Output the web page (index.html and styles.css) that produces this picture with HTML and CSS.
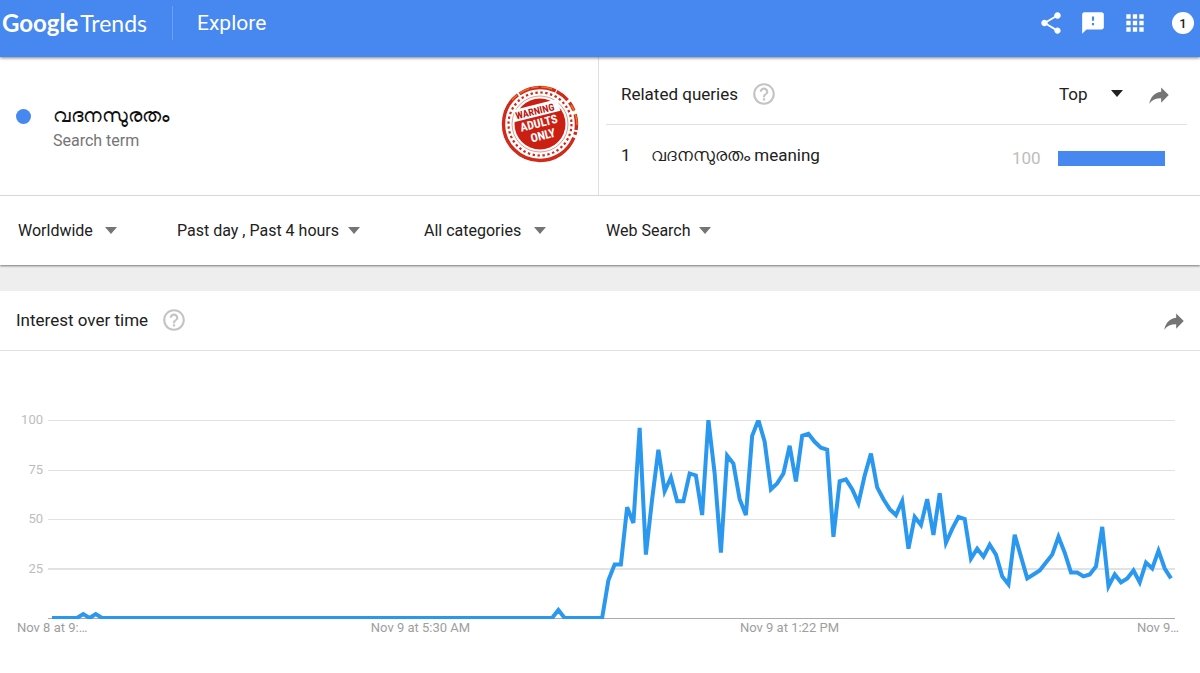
FILE: index.html
```html
<!DOCTYPE html>
<html lang="en">
<head>
  <meta charset="UTF-8">
  <meta name="viewport" content="width=device-width, initial-scale=1">
  <title>Google Trends - Explore</title>
  <link rel="stylesheet" href="styles.css">
</head>
<body>
  <header class="topbar">
    <a class="logo" href="#"><span class="logo-google">Google</span><span class="logo-trends">Trends</span></a>
    <a class="explore" href="#">Explore</a>
    <div class="topbar-actions">
      <button class="icon-btn" aria-label="Share">
        <svg viewBox="0 0 24 24"><path d="M18 16.08c-.76 0-1.44.3-1.96.77L8.91 12.7c.05-.23.09-.46.09-.7s-.04-.47-.09-.7l7.05-4.11c.54.5 1.25.81 2.04.81 1.66 0 3-1.34 3-3s-1.34-3-3-3-3 1.34-3 3c0 .24.04.47.09.7L8.04 9.81C7.5 9.31 6.79 9 6 9c-1.66 0-3 1.34-3 3s1.34 3 3 3c.79 0 1.5-.31 2.04-.81l7.12 4.16c-.05.21-.08.43-.08.65 0 1.61 1.31 2.92 2.92 2.92s2.92-1.31 2.92-2.92-1.31-2.92-2.92-2.92z"/></svg>
      </button>
      <button class="icon-btn" aria-label="Send feedback">
        <svg viewBox="0 0 24 24"><path d="M20 2H4c-1.1 0-2 .9-2 2v18l4-4h14c1.1 0 2-.9 2-2V4c0-1.1-.9-2-2-2zm-7 12h-2v-2h2v2zm0-4h-2V6h2v4z"/></svg>
      </button>
      <button class="icon-btn" aria-label="Apps">
        <svg viewBox="0 0 24 24"><path d="M4 8h4V4H4v4zm6 12h4v-4h-4v4zm-6 0h4v-4H4v4zm0-6h4v-4H4v4zm6 0h4v-4h-4v4zm6-10v4h4V4h-4zm-6 4h4V4h-4v4zm6 6h4v-4h-4v4zm0 6h4v-4h-4v4z"/></svg>
      </button>
      <button class="avatar" aria-label="Notifications">1</button>
    </div>
  </header>

  <main>
    <section class="summary">
      <div class="term">
        <span class="term-dot"></span>
        <div class="term-text">
          <div class="term-name" lang="ml">വദനസുരതം</div>
          <div class="term-type">Search term</div>
        </div>
        <svg class="stamp" viewBox="0 0 80 80" role="img" aria-label="Warning adults only">
          <circle cx="40" cy="40" r="36.5" fill="none" stroke="#cf2a1a" stroke-width="3.4" stroke-dasharray="6 2 3 3 134 2 38 1 14 3 9 4 12 1"/>
          <path d="M12 16A37 37 0 0 1 52 5M71 21A36.500 36.500 0 0 1 77 42" fill="none" stroke="#e8742a" stroke-width="1.400" stroke-dasharray="7 3 11 2"/>
          <circle cx="40" cy="40" r="31.500" fill="none" stroke="#cf2a1a" stroke-width="2.200" stroke-dasharray="2.400 2.550"/>
          <circle cx="40" cy="40" r="28" fill="none" stroke="#dc6a5c" stroke-width=".7"/>
          <circle cx="40" cy="40" r="25.500" fill="#cb1f14"/>
          <g transform="rotate(-14 40 40)">
            <path d="M18 20H63V32H15z" fill="#fff"/>
            <g font-family="Liberation Sans Narrow, Roboto Condensed, Liberation Sans, sans-serif" font-weight="700" text-anchor="middle">
              <text x="38" y="30" font-size="10" fill="#b9180f">WARNING</text>
              <text x="39" y="43" font-size="12" fill="#fff">ADULTS</text>
              <text x="40" y="56" font-size="12" fill="#fff">ONLY</text>
            </g>
          </g>
        </svg>
      </div>

      <div class="related">
        <div class="related-head">
          <h2>Related queries</h2>
          <button class="help" aria-label="Help">
            <svg viewBox="0 0 24 24"><path d="M11 18h2v-2h-2v2zm1-16C6.480 2 2 6.480 2 12s4.480 10 10 10 10-4.480 10-10S17.520 2 12 2zm0 18c-4.410 0-8-3.590-8-8s3.590-8 8-8 8 3.590 8 8-3.590 8-8 8zm0-14c-2.210 0-4 1.790-4 4h2c0-1.100.9-2 2-2s2 .9 2 2c0 2-3 1.750-3 5h2c0-2.250 3-2.500 3-5 0-2.210-1.790-4-4-4z"/></svg>
          </button>
          <span class="picker picker-top">
            <select aria-label="Sort queries"><option>Top</option></select>
          </span>
          <button class="share" aria-label="Share related queries">
            <svg viewBox="0 -2 24 24"><path d="M21 11l-7-7v4C7 9 4 14 3 19c2.500-3.500 6-5.100 11-5.100V18z"/></svg>
          </button>
        </div>
        <table class="queries">
          <tr>
            <td class="rank">1</td>
            <td class="query"><a href="#"><span lang="ml">വദനസുരതം</span> meaning</a></td>
            <td class="score">100</td>
            <td class="meter"><div class="meter-fill" style="width: 100%"></div></td>
          </tr>
        </table>
      </div>
    </section>

    <nav class="filters">
      <span class="picker"><select aria-label="Region"><option>Worldwide</option></select></span>
      <span class="picker picker-tight"><select aria-label="Time range"><option>Past day , Past 4 hours</option></select></span>
      <span class="picker"><select aria-label="Category"><option>All categories</option></select></span>
      <span class="picker picker-tight"><select aria-label="Search type"><option>Web Search</option></select></span>
    </nav>

    <section class="card">
      <div class="card-head">
        <h2>Interest over time</h2>
        <button class="help" aria-label="Help">
          <svg viewBox="0 0 24 24"><path d="M11 18h2v-2h-2v2zm1-16C6.480 2 2 6.480 2 12s4.480 10 10 10 10-4.480 10-10S17.520 2 12 2zm0 18c-4.410 0-8-3.590-8-8s3.590-8 8-8 8 3.590 8 8-3.590 8-8 8zm0-14c-2.210 0-4 1.790-4 4h2c0-1.100.9-2 2-2s2 .9 2 2c0 2-3 1.750-3 5h2c0-2.250 3-2.500 3-5 0-2.210-1.790-4-4-4z"/></svg>
        </button>
        <button class="share" aria-label="Share interest over time">
          <svg viewBox="0 -2 24 24"><path d="M21 11l-7-7v4C7 9 4 14 3 19c2.500-3.500 6-5.100 11-5.100V18z"/></svg>
        </button>
      </div>
      <div class="chart">
        <div class="y-axis">
          <span>100</span><span>75</span><span>50</span><span>25</span>
        </div>
        <div class="plot">
          <svg class="line" viewBox="0 0 179 100" preserveAspectRatio="none" role="img" aria-label="Interest over time chart">
            <polyline id="trendLine"/>
          </svg>
        </div>
      </div>
      <div class="x-axis">
        <span>Nov 8 at 9:…</span><span>Nov 9 at 5:30 AM</span><span>Nov 9 at 1:22 PM</span><span>Nov 9…</span>
      </div>
    </section>
  </main>

  <script>
    // one value per 8 minutes, quiet until index 88
    const values = Array(89).fill(0);
    values[5] = 2;
    values[7] = 2;
    values[81] = 4;
    values.push(
      19, 27, 27, 56, 48, 96, 32, 60, 85, 64, 71, 59, 59, 73, 72, 52,
      100, 73, 33, 82, 78, 60, 52, 92, 100, 89, 65, 68, 73, 87, 69, 92,
      93, 89, 86, 85, 41, 69, 70, 65, 58, 72, 83, 66, 60, 55, 52, 59,
      35, 51, 47, 60, 42, 63, 38, 45, 51, 50, 30, 35, 31, 37, 32, 21,
      17, 42, 31, 20, 22, 24, 28, 32, 41, 33, 23, 23, 21, 22, 26, 46,
      16, 22, 18, 20, 24, 18, 28, 25, 34, 25, 20
    );
    document.getElementById('trendLine').setAttribute('points',
      values.map((v, i) => i + ',' + (100 - v)).join(' '));
  </script>
</body>
</html>
```
FILE: styles.css
```css
* { box-sizing: border-box; }
body {
  margin: 0;
  font-family: Roboto, "Liberation Sans", sans-serif;
  font-size: 17px;
  color: #212121;
  background: #fff;
}
button { border: 0; padding: 0; background: none; cursor: pointer; }
svg { display: block; }
h2 { margin: 0; font-size: 17px; font-weight: 400; }
a { color: inherit; text-decoration: none; }

/* top bar */
.topbar {
  position: relative;
  display: flex;
  align-items: center;
  height: 57px;
  padding: 0 6px 11px 2px;
  background: #4687f0;
  color: #fff;
  box-shadow: 0 1px 3px rgba(0, 0, 0, .5);
}
.logo {
  display: flex;
  gap: 2px;
  width: 171px;
  height: 34px;
  align-items: center;
  border-right: 1px solid #6da0f4;
  font-family: Lato, sans-serif;
  font-size: 24px;
  line-height: 32px;
}
.logo-google { font-weight: 700; }
.logo-trends { font-size: 23px; }
.explore { margin-left: 24px; padding-bottom: 1px; font-size: 21px; }
.topbar-actions { display: flex; align-items: center; margin-left: auto; }
.icon-btn { margin-right: 16px; }
.icon-btn svg { width: 26px; height: 26px; fill: #fff; }
.avatar {
  width: 22px; height: 22px;
  margin-left: 8px;
  border-radius: 50%;
  background: #fff;
  color: #212121;
  font: 500 13px Roboto, sans-serif;
}

/* term + related queries */
.summary { display: flex; height: 139px; border-bottom: 1px solid #e0e0e0; }
.term {
  display: flex;
  align-items: center;
  width: calc(50% - 1px);
  padding: 0 18px 4px 16px;
  border-right: 1px solid #e0e0e0;
}
.term-dot { width: 15px; height: 15px; margin-top: -16px; border-radius: 50%; background: #4687f0; }
.term-text { margin-left: 22px; padding-top: 6px; }
.term-name { font-size: 20px; line-height: 28px; color: #111; }
.term-type { font-size: 16px; line-height: 24px; color: #757575; }
.stamp { width: 80px; height: 80px; margin-left: auto; }
.related { flex: 1; padding: 0 13px 0 7px; }
.related-head {
  display: flex;
  align-items: center;
  height: 68px;
  padding: 7px 15px 0 15px;
  border-bottom: 1px solid #e0e0e0;
}
.help { margin-left: 13px; }
.help svg { width: 26px; height: 26px; fill: #c4c4c4; }
.share svg { width: 26px; height: 26px; fill: #757575; }
.related-head .share { margin-left: 23px; }
.queries { width: 100%; border-collapse: collapse; }
.queries td { height: 60px; padding: 0; }
.queries .rank { width: 45px; padding-left: 15px; }
.queries .score { width: 46px; padding-top: 6px; color: #bdbdbd; }
.queries .meter { width: 129px; padding: 6px 22px 0 0; }
.meter-fill { height: 15px; background: #4687f0; }

/* drop-downs */
.picker { position: relative; display: inline-block; }
.picker select {
  appearance: none;
  border: 0;
  padding: 0 24px 0 0;
  background: none;
  color: inherit;
  font: 16px Roboto, sans-serif;
  line-height: 24px;
  cursor: pointer;
}
.picker::after {
  content: "";
  position: absolute;
  right: 0;
  top: 50%;
  margin-top: -4px;
  border: 6px solid transparent;
  border-top: 7px solid #757575;
  border-bottom: 0;
  pointer-events: none;
}
.picker-tight::after { right: 4px; }
.picker-top { margin-left: auto; }
.picker-top select { padding-right: 35px; font-size: 17px; }
.picker-top::after { border-top-color: #212121; }
.filters {
  position: relative;
  display: flex;
  align-items: center;
  gap: 60px;
  height: 69px;
  padding-left: 18px;
  background: #fff;
  box-shadow: 0 1px 2px rgba(0, 0, 0, .5);
}

/* chart card */
.card { border-top: 26px solid #eee; }
.card-head {
  display: flex;
  align-items: center;
  height: 60px;
  padding: 0 13px 1px 16px;
  border-bottom: 1px solid #e0e0e0;
}
.card-head .share { margin-left: auto; }
.chart { display: flex; padding: 61px 25px 0 0; font-size: 13px; }
.y-axis {
  display: grid;
  grid-template-rows: repeat(4, 1fr);
  width: 48px;
  height: 198px;
  padding-right: 5px;
  line-height: 16px;
  text-align: right;
  color: #bdbdbd;
}
.plot {
  flex: 1;
  height: 199px;
  margin-top: 8px;
  padding: 0 4px;
  border-bottom: 1px solid #aaa;
  background: repeating-linear-gradient(#e2e2e2 0 1px, transparent 1px 25%);
  background-size: 100% 198px;
}
/* the stroke is cut at the 100 line, and just under the zero line */
.line { width: 100%; height: 198px; overflow: visible; clip-path: inset(0 -4px -1px); }
.line polyline {
  fill: none;
  stroke: #2b98f0;
  stroke-width: 4px;
  vector-effect: non-scaling-stroke;
}
.x-axis {
  display: grid;
  grid-template-columns: 236fr 369fr 369fr 226fr;
  font-size: 13px;
  line-height: 18px;
  text-align: center;
  color: #9e9e9e;
}
.x-axis span:first-child { padding-left: 17px; text-align: left; }
.x-axis span:last-child { padding-right: 21px; text-align: right; }
```
